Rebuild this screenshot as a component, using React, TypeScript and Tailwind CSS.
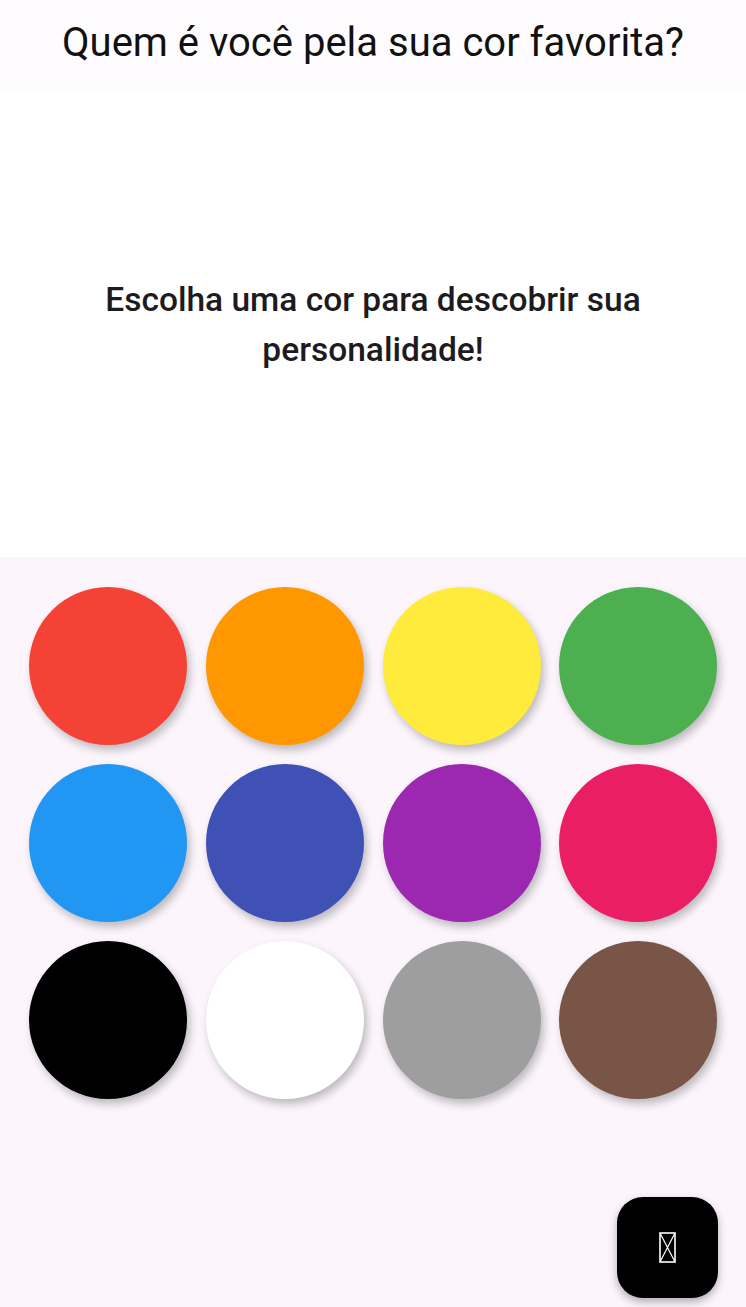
import React from "react";

const colors = [
  "#F44336",
  "#FF9800",
  "#FFEB3B",
  "#4CAF50",
  "#2196F3",
  "#3F51B5",
  "#9C27B0",
  "#E91E63",
  "#000000",
  "#FFFFFF",
  "#9E9E9E",
  "#795548",
];

const App: React.FC = () => {
  return (
    <div
      className="relative flex flex-col h-screen w-full overflow-hidden"
      style={{ fontFamily: "Roboto, 'Noto Sans', sans-serif" }}
    >
      <header className="h-[92px] shrink-0 bg-[#fefcfe] flex items-start justify-center pt-[19px]">
        <h1 className="text-[40px] leading-[48px] text-[#111111] font-normal">
          Quem é você pela sua cor favorita?
        </h1>
      </header>

      <div className="h-[465px] shrink-0 bg-white flex items-center justify-center px-[100px]">
        <p className="text-center text-[33.5px] leading-[50px] font-medium text-[#1d1b20]">
          Escolha uma cor para descobrir sua personalidade!
        </p>
      </div>

      <div className="flex-1 bg-[#fcf6fc] px-[29px] pt-[30px]">
        <div className="grid grid-cols-4 gap-x-[19px] gap-y-[19px]">
          {colors.map((c) => (
            <button
              key={c}
              className="w-[158px] h-[158px] rounded-full shadow-[3px_5px_9px_rgba(0,0,0,0.25)]"
              style={{ backgroundColor: c }}
            />
          ))}
        </div>
      </div>

      <button className="absolute right-[28px] bottom-[9px] w-[101px] h-[101px] rounded-[26px] bg-black flex items-center justify-center shadow-[0_4px_8px_rgba(0,0,0,0.3)]">
        <svg width="17" height="31" viewBox="0 0 17 31" fill="none" stroke="white" strokeWidth="1.6">
          <rect x="1" y="1" width="15" height="29" />
          <path d="M1 1 L16 30 M16 1 L1 30" strokeWidth="1.2" />
        </svg>
      </button>
    </div>
  );
};

export default App;
